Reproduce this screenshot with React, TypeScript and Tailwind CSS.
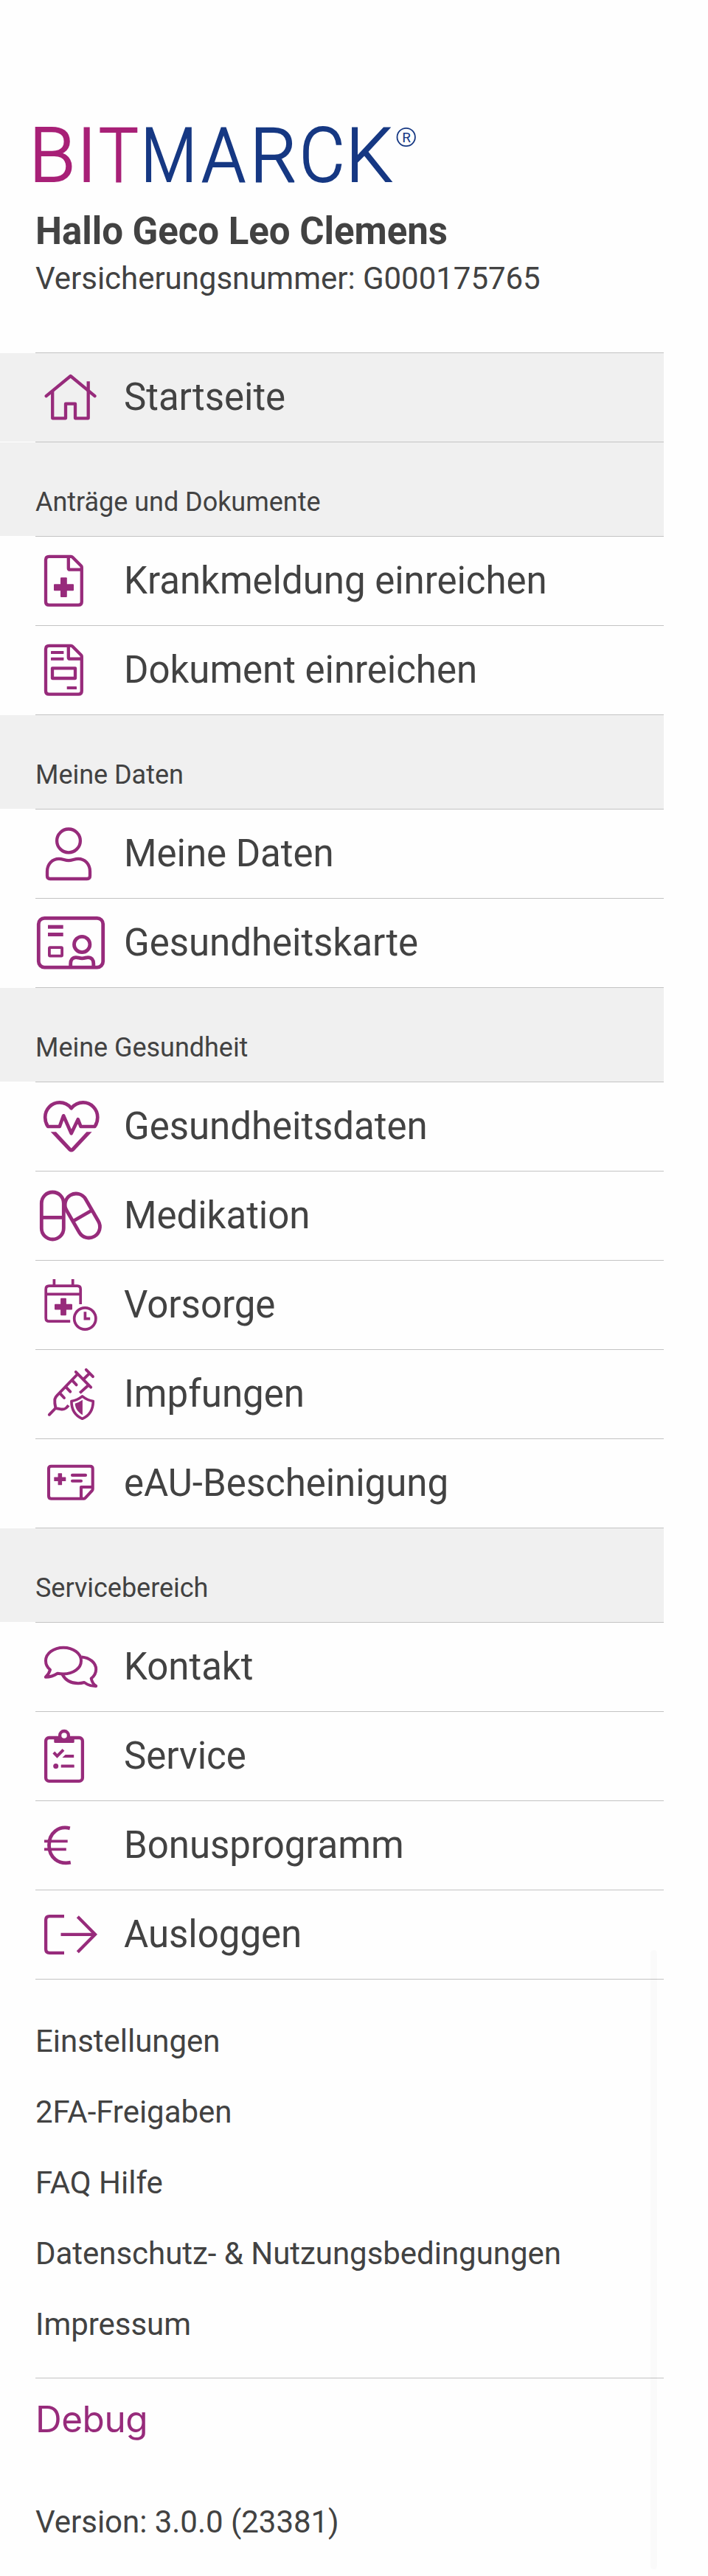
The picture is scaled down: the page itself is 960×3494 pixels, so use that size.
import type { ReactNode } from "react";

type Item = { label: string; icon: ReactNode; active?: boolean };
type Section = { title: string; items: Item[] };

/* Icons are drawn in a 96x120 cell whose horizontal axis starts at 48. */
function Icon({ children, width = 4.3 }: { children: ReactNode; width?: number }) {
  return (
    <svg
      viewBox="48 0 96 120"
      className="h-[120px] w-24 shrink-0 text-[#972b7b]"
      fill="none"
      stroke="currentColor"
      strokeWidth={width}
      strokeLinejoin="round"
      aria-hidden="true"
    >
      {children}
    </svg>
  );
}

const solid = { fill: "currentColor", stroke: "none" };

const HomeIcon = (
  <Icon>
    <path strokeLinecap="round" d="M62.7 58.2 95.7 31 128.5 58.2" />
    <path d="M71.2 51V88.3H89V68.7H102V88.3H119.7V38.2" />
  </Icon>
);

const pageOutline = "M96.3 26.8H66.5Q62 26.8 62 31.3V88.2Q62 92.7 66.5 92.7H106.3Q110.8 92.7 110.8 88.2V41.5Q110.8 40.3 110 39.5L98.3 27.7Q97.5 26.8 96.3 26.8ZM92.8 27V42.7Q92.8 44.7 94.8 44.7H110.5";

const SickNoteIcon = (
  <Icon>
    <path d={pageOutline} />
    <g {...solid}>
      <rect x="73" y="64.3" width="27" height="9" rx="1" />
      <rect x="82" y="55.3" width="8.8" height="26.8" rx="1" />
    </g>
  </Icon>
);

const DocumentIcon = (
  <Icon>
    <path d={pageOutline} />
    <rect x="71" y="57.3" width="31" height="13.7" />
    <g {...solid}>
      <rect x="69" y="34" width="17.4" height="4.1" rx=".6" />
      <rect x="69" y="42.7" width="17.4" height="4.1" rx=".6" />
      <rect x="90.7" y="82" width="13.3" height="4.1" rx=".6" />
    </g>
  </Icon>
);

const PersonIcon = (
  <Icon>
    <circle cx="93" cy="42.4" r="15.9" />
    <path d="M64 90V84C64 74 71 66.8 80 66.8 85 66.8 88 69.2 93 69.2S101 66.8 106 66.8C115 66.8 122 74 122 84V90Q122 94 118 94H68Q64 94 64 90Z" />
  </Icon>
);

const CardIcon = (
  <Icon width={4.8}>
    <rect x="52.3" y="26.3" width="87.4" height="66.8" rx="8" />
    <rect x="66.9" y="66.2" width="17.2" height="11.4" rx="1" strokeWidth="3.8" />
    <circle cx="111.2" cy="62" r="10.7" />
    <path d="M95.7 93V88C95.7 83 98.5 79.6 103 79.6 106 79.6 107.5 80.8 111.3 80.8S116.5 79.6 119.5 79.6C124 79.6 126.8 83 126.8 88V93" />
    <g {...solid}>
      <rect x="65" y="35.7" width="20.7" height="5" />
      <rect x="65" y="46" width="20.7" height="5" />
    </g>
  </Icon>
);

const HeartIcon = (
  <Icon width={4.7}>
    <path d="M96.7 35.2C92.5 30 87 27.4 80.8 27.4 69.8 27.4 61.2 36.5 61.2 47.5 61.2 52 62.5 56.5 65 60H80.8L86.1 45.3 96.7 69.3 105.8 50.3 109.5 60H128.5C131 56.5 132.3 52 132.3 47.5 132.3 36.5 123.7 27.4 112.7 27.4 106.5 27.4 101 30 96.7 35.2Z" />
    <path {...solid} d="M68.7 67.3H76L96.7 89.6 117.4 67.3H124.6L100.4 93Q96.7 96 93 93Z" />
  </Icon>
);

const PillsIcon = (
  <Icon width={4.8}>
    <rect x="56.3" y="28" width="30" height="64" rx="15" />
    <path d="M56.3 62.4H86.3" />
    <g transform="rotate(-30 111.8 60)">
      <rect x="96.8" y="27.7" width="30" height="64.6" rx="15" />
      <path d="M96.8 60H126.8" />
    </g>
  </Icon>
);

const CheckupIcon = (
  <Icon width={3.7}>
    <path d="M95.2 82.2H66.7Q62.2 82.2 62.2 77.7V38.7Q62.2 34.2 66.7 34.2H104.7Q109.2 34.2 109.2 38.7V59M62.2 45.4H109.2M73.4 25V34M98.7 25V34" />
    <circle cx="115.3" cy="78.5" r="14.6" />
    <path strokeLinejoin="miter" d="M115.4 69.2V78.6H122.2" />
    <g {...solid}>
      <rect x="74" y="58.7" width="24" height="7.7" rx="1" />
      <rect x="82.1" y="50.8" width="7.8" height="23.4" rx="1" />
    </g>
  </Icon>
);

const VaccineIcon = (
  <Icon width={3.9}>
    <path strokeLinecap="round" d="M66.8 87.8 75.3 79M102.8 29.8 123.2 50.6M116.8 26.8 126 36.2M82 59.7 87 65M90.3 51.3 95.3 56.6M98.7 42.2 103.6 47.4" />
    <path d="M92.9 75.2C89.5 80 87 81.2 82.5 80.3L75.5 79C74.3 74 74 70 74.3 67 74.8 64.5 75.7 63.5 77.5 61.7L105 33M113 40 121.5 31.6M120.3 47.5 108.2 58.4" />
    <path strokeWidth="3.6" d="M111.6 62.8C107.5 66 102.5 68.6 96.9 69.5 96.9 81 101.5 89 111.6 93.3 121.7 89 126.3 81 126.3 69.5 120.7 68.6 115.7 66 111.6 62.8Z" />
    <path {...solid} d="M111.9 67.8V88.2C105.5 84.6 102 79 101.7 72.8Q107.5 71 111.9 67.8Z" />
  </Icon>
);

const CertificateIcon = (
  <Icon width={4.1}>
    <path d="M114 80.7H69.5Q66 80.7 66 77.2V40.2Q66 36.7 69.5 36.7H122.2Q125.7 36.7 125.7 40.2V67.5Q125.7 68.8 124.8 69.8L115.8 79.6Q115 80.7 114 80.7ZM110 80.7V65H125.7" />
    <path strokeLinecap="round" d="M98 48.9H116M98 56.8H110" />
    <g {...solid}>
      <rect x="73.3" y="51.6" width="16" height="5.5" rx=".6" />
      <rect x="78.6" y="46.3" width="5.5" height="16" rx=".6" />
    </g>
  </Icon>
);

const ChatIcon = (
  <Icon width={4}>
    <path d="M68 63.8C64 60.5 62 56.3 62 51.7 62 41.5 72.8 33.7 86 33.7S110 41.5 110 51.7 99.2 69.5 86 69.5Q82 69.5 78 68.8 70.5 73.6 61.8 73.8 66.5 69.5 68 63.8Z" />
    <path d="M110.5 46.4C121.8 47.3 130.2 54.5 130.2 63.3 130.2 68.2 128 72.3 123.7 75.6 124.7 80.5 126.5 83.5 130.2 85.8V86.1Q121.5 86.3 114.3 81 110 82.2 106 82.2C96.8 82.2 88.8 78.2 84.6 70.2" />
  </Icon>
);

const ClipboardIcon = (
  <Icon>
    <rect x="62.1" y="35" width="49.8" height="58.9" rx="4.5" />
    <path {...solid} d="M73.3 34H100.7V40.5Q100.7 42 99.2 42H74.8Q73.3 42 73.3 40.5Z" />
    <circle cx="87" cy="31.9" r="5.9" fill="#fefefe" />
    <path strokeLinejoin="miter" strokeWidth="4" d="M72.8 55 77.5 59.8 86 51.3" />
    <g {...solid}>
      <path d="M84.5 62 88.6 58H100.2V62Z" />
      <circle cx="75.7" cy="73.4" r="3.5" />
      <rect x="82.7" y="71.4" width="18" height="4.2" rx=".6" />
    </g>
  </Icon>
);

const EuroIcon = (
  <Icon width={4.8}>
    <path d="M94.8 36.8C79.5 33 66.5 43 66.5 59.7 66.5 76.5 79.5 86.6 95.8 83.2" />
    <path strokeWidth="3.9" d="M60 54.4H91.7M60 65.4H89.8" />
  </Icon>
);

const LogoutIcon = (
  <Icon>
    <path d="M87 35.1H67.2Q62.1 35.1 62.1 40.2V79.8Q62.1 84.9 67.2 84.9H87" />
    <path strokeLinejoin="miter" d="M82.5 59.8H129M105.3 35.7 129 59.8 105.3 83.8" />
  </Icon>
);

const sections: Section[] = [
  {
    title: "Anträge und Dokumente",
    items: [
      { label: "Krankmeldung einreichen", icon: SickNoteIcon },
      { label: "Dokument einreichen", icon: DocumentIcon },
    ],
  },
  {
    title: "Meine Daten",
    items: [
      { label: "Meine Daten", icon: PersonIcon },
      { label: "Gesundheitskarte", icon: CardIcon },
    ],
  },
  {
    title: "Meine Gesundheit",
    items: [
      { label: "Gesundheitsdaten", icon: HeartIcon },
      { label: "Medikation", icon: PillsIcon },
      { label: "Vorsorge", icon: CheckupIcon },
      { label: "Impfungen", icon: VaccineIcon },
      { label: "eAU-Bescheinigung", icon: CertificateIcon },
    ],
  },
  {
    title: "Servicebereich",
    items: [
      { label: "Kontakt", icon: ChatIcon },
      { label: "Service", icon: ClipboardIcon },
      { label: "Bonusprogramm", icon: EuroIcon },
      { label: "Ausloggen", icon: LogoutIcon },
    ],
  },
];

const links = ["Einstellungen", "2FA-Freigaben", "FAQ Hilfe", "Datenschutz- & Nutzungsbedingungen", "Impressum"];

/* Each letter of the word mark: left edge, horizontal stretch. */
const letters: { ch: string; x: number; sx: number }[] = [
  { ch: "B", x: 39.5, sx: 1 },
  { ch: "I", x: 104, sx: 1 },
  { ch: "T", x: 134, sx: 0.88 },
  { ch: "M", x: 191, sx: 0.86 },
  { ch: "A", x: 273.5, sx: 0.93 },
  { ch: "R", x: 339, sx: 0.98 },
  { ch: "C", x: 406, sx: 0.93 },
  { ch: "K", x: 469, sx: 0.98 },
];

function Logo() {
  return (
    <svg viewBox="0 -14 600 130" className="h-[130px] w-[600px]" role="img">
      {letters.map((l, i) => (
        <text
          key={l.ch}
          transform={`translate(${l.x} 86) scale(${l.sx} 1)`}
          className="font-light"
          fontSize="102"
          fill={i < 3 ? "#a82077" : "#163883"}
          stroke={i < 3 ? "#a82077" : "#163883"}
          strokeWidth="2"
        >
          {l.ch}
        </text>
      ))}
      <circle cx="550.7" cy="26" r="12.2" fill="none" stroke="#163883" strokeWidth="1.8" />
      <text x="551.2" y="32.7" textAnchor="middle" fontSize="19" fill="#163883">
        R
      </text>
    </svg>
  );
}

function Divider() {
  return <div className="ml-12 h-px bg-[#c3c3c3]" />;
}

function Row({ label, icon, active }: Item) {
  return (
    <>
      <div className={active ? "flex h-[120px] items-center bg-[#f0f0f0] pl-12" : "flex h-[120px] items-center pl-12"}>
        {icon}
        <span className="pl-6 text-[51px] leading-[60px] whitespace-nowrap">{label}</span>
      </div>
      <Divider />
    </>
  );
}

export default function App() {
  return (
    <div className="relative h-[3494px] w-[960px] overflow-hidden bg-[#fefefe] font-['Roboto',sans-serif] tracking-[-0.03px] text-[#424242]">
      <div className="w-[900px]">
        <header className="h-[478px] pt-[146px]">
          <Logo />
          <h1 className="mt-2 pl-12 text-[51px] leading-[60px] font-bold">Hallo Geco Leo Clemens</h1>
          <p className="mt-2.5 pl-12 text-[42px] leading-[48px]">Versicherungsnummer: G000175765</p>
        </header>
        <Divider />
        <nav>
          <Row label="Startseite" icon={HomeIcon} active />
          {sections.map((s) => (
            <section key={s.title}>
              <h2 className="h-[127px] bg-[#f0f0f0] pt-[60px] pl-12 text-[36px] leading-[42px]">{s.title}</h2>
              <Divider />
              {s.items.map((item) => (
                <Row key={item.label} {...item} />
              ))}
            </section>
          ))}
        </nav>
        <ul className="pt-9 pb-6 pl-12 text-[42px] leading-[96px]">
          {links.map((l) => (
            <li key={l}>{l}</li>
          ))}
        </ul>
        <Divider />
        <div className="flex h-[110px] items-center pl-12 font-['Inter',sans-serif] text-[49.5px] leading-[60px] tracking-[-0.5px] text-[#972b7b]">Debug</div>
        <p className="pt-[61px] pl-12 text-[42px] leading-[48px]">Version: 3.0.0 (23381)</p>
      </div>
      <div className="absolute top-[2645px] left-[882px] h-[840px] w-[9px] rounded-full bg-black/[0.016]" />
    </div>
  );
}
